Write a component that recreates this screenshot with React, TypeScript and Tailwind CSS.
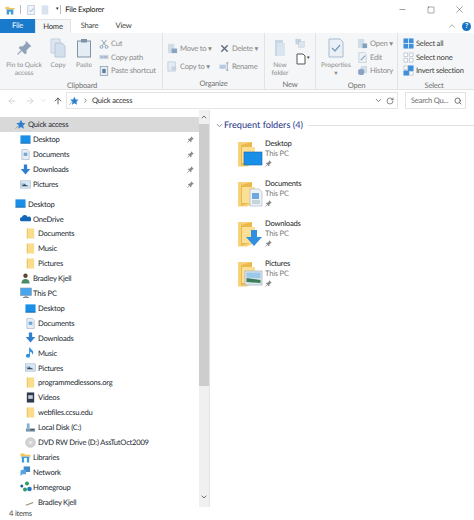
import { ReactNode } from "react";
import { ArrowLeft, ArrowRight, ArrowUp, ChevronDown, ChevronRight, ChevronUp, Minus, RotateCw, Search, Square, X } from "lucide-react";

function Sv({ s = 11, vb = "0 0 12 12", children, className = "" }: { s?: number; vb?: string; children: ReactNode; className?: string }) {
  return (
    <svg width={s} height={s} viewBox={vb} className={"shrink-0 " + className}>
      {children}
    </svg>
  );
}

const Star = ({ s = 11 }: { s?: number }) => (
  <Sv s={s}>
    <path d="M6.5 0.8l1.5 3.4 3.5.4-2.6 2.3.8 3.6-3.2-1.9-3 1.9.7-3.6L1.3 4.6l3.6-.4z" fill="#2f7fd0" />
    <path d="M0.5 10.5L4 7" stroke="#8aa" strokeWidth="1" />
  </Sv>
);
const Pin = ({ s = 7, c = "#8a8a8a" }: { s?: number; c?: string }) => (
  <Sv s={s} vb="0 0 10 10">
    <path d="M6 0.5l3.5 3.5-1.2.6-2 2 .1 1.7-1 .6-4-4 .7-1 1.6.1 2-2z" fill={c} />
    <path d="M3 7L.5 9.5" stroke={c} strokeWidth="1" />
  </Sv>
);
const FolderSmall = () => (
  <Sv s={11}>
    <path d="M2 0.5h8v11H2z" fill="#fbdc8b" />
    <path d="M2 0.5h1v11H2z" fill="#e8c25f" />
  </Sv>
);
const DesktopIcon = () => (
  <Sv s={11}>
    <rect x="0.5" y="1.5" width="11" height="8.5" fill="#1a8fe8" />
    <rect x="0.5" y="9.5" width="11" height="1" fill="#1467a8" />
  </Sv>
);
const DocIcon = () => (
  <Sv s={11}>
    <path d="M2 0.5h6l2 2v9H2z" fill="#e9eef4" stroke="#9fb3c8" strokeWidth="0.7" />
    <rect x="4" y="4" width="4" height="3.5" fill="#6fa8dc" />
  </Sv>
);
const DownIcon = () => (
  <Sv s={11}>
    <path d="M4.2 0.5h3.6v5h3.4L6 11.5.8 5.5h3.4z" fill="#2f7fd0" />
  </Sv>
);
const PicIcon = () => (
  <Sv s={11}>
    <rect x="0.5" y="2" width="11" height="8" fill="#d9e6f2" stroke="#9fb3c8" strokeWidth="0.6" />
    <path d="M1.5 8l3-2.5 5 2.5z" fill="#33485e" />
    <path d="M1.5 5h5l-5 1.5z" fill="#6fa8dc" />
  </Sv>
);
const CloudIcon = () => (
  <Sv s={11}>
    <path d="M1 9a2.3 2.3 0 0 1 1-4.3 3.4 3.4 0 0 1 6.4-.3A2.6 2.6 0 0 1 11 9z" fill="#1565b8" />
  </Sv>
);
const UserIcon = () => (
  <Sv s={11}>
    <circle cx="6" cy="3" r="2.4" fill="#5a4632" />
    <path d="M1.5 11.5c0-3.5 2-5 4.5-5s4.5 1.5 4.5 5z" fill="#4c8a68" />
  </Sv>
);
const PcIcon = () => (
  <Sv s={12}>
    <rect x="0.5" y="1" width="11" height="7.5" fill="#49a6ee" stroke="#8097ad" strokeWidth="0.6" />
    <rect x="4.5" y="8.5" width="3" height="1.5" fill="#9aa9b8" />
    <rect x="3" y="10" width="6" height="1" fill="#7d8b99" />
  </Sv>
);
const MusicIcon = () => (
  <Sv s={11}>
    <path d="M4.5 0.5h1c.3 2 3.5 2.5 3.5 5.5 0 1-.4 2-1 2.5.2-2-1-3-2.500-3.300V9.500a2.200 2 0 1 1-1-1.600z" fill="#2f8fe0" />
  </Sv>
);
const VideoIcon = () => (
  <Sv s={11}>
    <rect x="2" y="0.500" width="8" height="11" fill="#2f3a4f" />
    <rect x="3.500" y="3.500" width="5" height="4" fill="#c4cbd6" />
  </Sv>
);
const DiskIcon = () => (
  <Sv s={11}>
    <rect x="1" y="7" width="10" height="3.500" fill="#8097a8" />
    <rect x="2" y="1.500" width="3" height="5.500" fill="#7fb0d8" />
    <rect x="6" y="8" width="4" height="1" fill="#2d3b45" />
  </Sv>
);
const DvdIcon = () => (
  <Sv s={11}>
    <circle cx="6" cy="6" r="5.300" fill="#d2d4d6" stroke="#a9abad" strokeWidth="0.500" />
    <circle cx="6" cy="6" r="1.300" fill="#f5f5f5" />
  </Sv>
);
const LibIcon = () => (
  <Sv s={11}>
    <path d="M0.500 1.500h4l1 1.500h6v2h-11z" fill="#f4c552" />
    <path d="M1.500 5h9v1.500h-9z" fill="#3f9ad6" />
    <path d="M2 6.500h2.500v5H2zM7.500 6.500H10v5H7.500z" fill="#3f9ad6" />
  </Sv>
);
const NetIcon = () => (
  <Sv s={11}>
    <rect x="4" y="0.500" width="7" height="6" fill="#3f88c9" />
    <path d="M0.500 6a2 2 0 0 1 2-2h4v5h-4l-2 2z" fill="#5aa3de" />
  </Sv>
);
const HomeIcon = () => (
  <Sv s={12}>
    <circle cx="1.800" cy="5" r="1.500" fill="#1f5f9e" />
    <circle cx="7" cy="2.500" r="2" fill="#2a9d5c" />
    <circle cx="9.500" cy="8" r="2.300" fill="#1f76c4" />
    <circle cx="5" cy="8.500" r="2" fill="#2a9d5c" />
  </Sv>
);
const UserFlat = () => (
  <Sv s={11}>
    <path d="M1 10l8-3" stroke="#9a8a70" strokeWidth="1.200" />
  </Sv>
);

const nav: { icon: ReactNode; label: string; lvl: 1 | 2 | 3; pin?: boolean; sel?: boolean; gap?: boolean }[] = [
  { icon: <Star />, label: "Quick access", lvl: 3, sel: true },
  { icon: <DesktopIcon />, label: "Desktop", lvl: 1, pin: true },
  { icon: <DocIcon />, label: "Documents", lvl: 1, pin: true },
  { icon: <DownIcon />, label: "Downloads", lvl: 1, pin: true },
  { icon: <PicIcon />, label: "Pictures", lvl: 1, pin: true },
  { icon: <DesktopIcon />, label: "Desktop", lvl: 3, gap: true },
  { icon: <CloudIcon />, label: "OneDrive", lvl: 1 },
  { icon: <FolderSmall />, label: "Documents", lvl: 2 },
  { icon: <FolderSmall />, label: "Music", lvl: 2 },
  { icon: <FolderSmall />, label: "Pictures", lvl: 2 },
  { icon: <UserIcon />, label: "Bradley Kjell", lvl: 1 },
  { icon: <PcIcon />, label: "This PC", lvl: 1 },
  { icon: <DesktopIcon />, label: "Desktop", lvl: 2 },
  { icon: <DocIcon />, label: "Documents", lvl: 2 },
  { icon: <DownIcon />, label: "Downloads", lvl: 2 },
  { icon: <MusicIcon />, label: "Music", lvl: 2 },
  { icon: <PicIcon />, label: "Pictures", lvl: 2 },
  { icon: <FolderSmall />, label: "programmedlessons.org", lvl: 2 },
  { icon: <VideoIcon />, label: "Videos", lvl: 2 },
  { icon: <FolderSmall />, label: "webfiles.ccsu.edu", lvl: 2 },
  { icon: <DiskIcon />, label: "Local Disk (C:)", lvl: 2 },
  { icon: <DvdIcon />, label: "DVD RW Drive (D:) AssTutOct2009", lvl: 2 },
  { icon: <LibIcon />, label: "Libraries", lvl: 1 },
  { icon: <NetIcon />, label: "Network", lvl: 1 },
  { icon: <HomeIcon />, label: "Homegroup", lvl: 1 },
  { icon: <UserFlat />, label: "Bradley Kjell", lvl: 2 },
];

const indent = { 1: "pl-[20px]", 2: "pl-[25px]", 3: "pl-[15px]" };

function NavPane() {
  return (
    <div className="w-[199px] pt-[7px] overflow-hidden">
      {nav.map((n, i) => (
        <div
          key={i}
          className={
            "h-[14.9px] flex items-center gap-[2px] pr-[5px] " +
            indent[n.lvl] +
            (n.sel ? " bg-[#d9d9d9]" : "") +
            (n.gap ? " mt-[5px]" : "")
          }
        >
          <span className="w-[11px] flex justify-center shrink-0">{n.icon}</span>
          <span className="flex-1 pt-[1px] whitespace-nowrap text-[#222831]">{n.label}</span>
          {n.pin && <Pin />}
        </div>
      ))}
    </div>
  );
}

function ScrollBar() {
  return (
    <div className="w-[10px] flex flex-col items-stretch bg-[#f0f0f0] text-[#555]">
      <div className="h-[14px] pt-[3px] flex justify-center"><ChevronUp size={8} strokeWidth={2.5} /></div>
      <div className="h-[262px] bg-[#cdcdcd]" />
      <div className="flex-1" />
      <div className="h-[14px] flex justify-center"><ChevronDown size={8} strokeWidth={2.5} /></div>
    </div>
  );
}

function BigFolder({ children }: { children?: ReactNode }) {
  return (
    <Sv s={26} vb="0 0 26 26">
      <path d="M1 1h14v22l-5 2.500H1z" fill="#f6d27a" />
      <path d="M4 4l11-3v20L4 25z" fill="#e9b94e" />
      <path d="M5 6h13v16H5z" fill="#fbdf95" />
      {children}
    </Sv>
  );
}

const frequent = [
  { label: "Desktop", over: <><rect x="7" y="11" width="18" height="13" fill="#1a8fe8" stroke="#1467a8" strokeWidth="0.600" /></> },
  { label: "Documents", over: <><path d="M13 8h9l3 3v14H13z" fill="#eef2f6" stroke="#9fb3c8" strokeWidth="0.600" /><rect x="15" y="12" width="7" height="6" fill="#6fa8dc" /><path d="M15 20h8M15 22h8" stroke="#8aa" strokeWidth="0.800" /></> },
  { label: "Downloads", over: <path d="M14 9h6v7h5l-8 9-8-9h5z" fill="#2f8fe0" /> },
  { label: "Pictures", over: <><rect x="8" y="10" width="17" height="14" fill="#dde7f0" stroke="#aab6c2" strokeWidth="0.800" /><path d="M9.500 11.500h14v6l-14-1z" fill="#9cc8ea" /><path d="M9.500 21v-4l7 1 7 1v3z" fill="#3d7d5a" /></> },
];

function Content() {
  return (
    <div className="flex-1 pt-[7px] border-l border-[#e4e4e4] overflow-hidden">
      <div className="h-[14px] flex items-center pl-[5px] mt-[1px]">
        <ChevronDown size={9} className="text-[#5a6a88]" />
        <span className="text-[9.200px] tracking-normal text-[#1e3287] whitespace-nowrap">Frequent folders (4)</span>
        <div className="flex-1 h-px bg-[#e2e2e2] ml-[5px]" />
      </div>
      <div className="flex flex-col gap-[10px] pl-[27px] pt-[7px]">
        {frequent.map((f) => (
          <div key={f.label} className="h-[30px] flex items-center gap-[2px]">
            <BigFolder>{f.over}</BigFolder>
            <div className="flex flex-col pb-[1px] leading-[9.500px]">
              <span className="text-[#1c1c1c]">{f.label}</span>
              <span className="text-[#7b7b7b]">This PC</span>
              <span className="h-[9.500px] flex items-center"><Pin /></span>
            </div>
          </div>
        ))}
      </div>
    </div>
  );
}

function Group({ label, className, children }: { label: string; className: string; children: ReactNode }) {
  return (
    <div className={"flex flex-col border-r border-[#e2e3e4] " + className}>
      <div className="flex-1 flex">{children}</div>
      <div className="h-[13px] text-center leading-[15px] text-[#6f6f6f]">{label}</div>
    </div>
  );
}

function BigBtn({ icon, lines, className = "" }: { icon: ReactNode; lines: string[]; className?: string }) {
  return (
    <div className={"flex flex-col items-center text-center pt-[4px] " + className}>
      <div className="h-[21px] flex items-center justify-center">{icon}</div>
      <div className="flex flex-col mt-[3px] text-[6.600px] tracking-normal leading-[8px] text-[#8b8b8b] whitespace-nowrap">
        {lines.map((l) => <span key={l} className="h-[8px]">{l}</span>)}
      </div>
    </div>
  );
}

function Small({ icon, children, dark }: { icon: ReactNode; children: ReactNode; dark?: boolean }) {
  return (
    <div className={"h-[13.500px] flex items-center gap-[2px] whitespace-nowrap " + (dark ? "text-[#3c3c3c]" : "text-[#8b8b8b]")}>
      <span className="w-[11px] flex justify-center">{icon}</span>
      {children}
    </div>
  );
}

const tiny = {
  cut: <Sv s={10}><path d="M3 1l5 7M9 1L4 8" stroke="#7f93a8" strokeWidth="1" fill="none" /><circle cx="3" cy="9.500" r="1.700" fill="none" stroke="#7f93a8" /><circle cx="9" cy="9.500" r="1.700" fill="none" stroke="#7f93a8" /></Sv>,
  path: <Sv s={10}><rect x="0.500" y="3.500" width="11" height="5" fill="#c8d6e4" /><path d="M2 6h3M6 6h4" stroke="#7f93a8" /></Sv>,
  shortcut: <Sv s={10}><rect x="1.500" y="0.500" width="9" height="11" fill="#e8eef5" stroke="#7f93a8" strokeWidth="0.800" /><rect x="4" y="3.500" width="4" height="5" fill="#5b7ca0" /></Sv>,
  move: <Sv s={11}><rect x="1" y="1" width="7" height="10" fill="#d3dde8" /><rect x="5" y="6" width="6" height="5" fill="#8aa5c2" /></Sv>,
  copyTo: <Sv s={11}><rect x="1" y="1" width="8" height="10" fill="#e4ebf2" stroke="#b5c3d1" strokeWidth="0.700" /><rect x="5" y="6" width="5" height="4" fill="#c3d2e0" /></Sv>,
  del: <X size={11} strokeWidth={3} className="text-[#5b6b7b]" />,
  ren: <Sv s={11}><rect x="0.500" y="4" width="7" height="4.500" fill="#b7cbe0" /><path d="M9 2v8M7.500 2h3M7.500 10h3" stroke="#7f93a8" strokeWidth="0.800" /></Sv>,
  open: <Sv s={11}><rect x="1" y="1" width="7" height="10" fill="#d3dde8" /><rect x="6" y="6" width="5" height="5" fill="#7f9fbf" /></Sv>,
  edit: <Sv s={11}><path d="M2 0.500h6l2 2v9H2z" fill="#eef2f6" stroke="#b5c3d1" strokeWidth="0.700" /><path d="M4 9l5-5" stroke="#8aa5c2" strokeWidth="1.200" /></Sv>,
  hist: <Sv s={11}><rect x="4" y="1" width="7" height="8" fill="#d3dde8" /><circle cx="4.500" cy="7.500" r="3.500" fill="#8aa5c2" /></Sv>,
  all: <Sv s={11}><rect x="0.500" y="0.500" width="11" height="11" fill="#3d8fdc" /><path d="M6 .5v11M.5 6h11" stroke="#fff" strokeWidth="0.800" /></Sv>,
  none: <Sv s={11}><path d="M1 1h4v4H1zM7 1h4v4H7zM1 7h4v4H1zM7 7h4v4H7z" fill="#fff" stroke="#a8b4c0" strokeWidth="0.700" /></Sv>,
  inv: <Sv s={11}><rect x="5.500" y="0.500" width="6" height="6" fill="#3d8fdc" /><rect x="0.500" y="6" width="6" height="5.500" fill="#3d8fdc" /><path d="M1 1h4v4H1zM7 7h4v4H7z" fill="#fff" stroke="#a8b4c0" strokeWidth="0.700" /></Sv>,
};

function Ribbon() {
  return (
    <div className="h-[57px] flex bg-[#f5f6f7] border-b border-[#e2e3e4] pl-[2px]">
      <Group label="Clipboard" className="w-[161px]">
        <BigBtn
          className="w-[44px]"
          icon={<Sv s={15} vb="0 0 12 12"><path d="M7 0.500l4.500 4.500-1.500.8-2.500 2.500.2 2.200-1.300.8-5-5 .9-1.300 2.100.2 2.500-2.500z" fill="#8fa2b8" /><path d="M3.500 8.500L.5 11.500" stroke="#8fa2b8" /></Sv>}
          lines={["Pin to Quick", "access"]}
        />
        <BigBtn
          className="w-[24px]"
          icon={<Sv s={20} vb="0 0 20 20"><path d="M3 1h9v14H3z" fill="#dfe8f2" stroke="#c4d1de" /><path d="M7 5h7l3 3v11H7z" fill="#d3e0ec" stroke="#b6c7d8" /></Sv>}
          lines={["Copy"]}
        />
        <BigBtn
          className="w-[28px]"
          icon={<Sv s={20} vb="0 0 20 20"><rect x="3.500" y="3" width="13" height="16" fill="#e4ecf4" stroke="#7f93a8" /><rect x="7" y="1" width="6" height="3.500" fill="#7f93a8" /></Sv>}
          lines={["Paste"]}
        />
        <div className="pt-[4px]">
          <Small icon={tiny.cut}>Cut</Small>
          <Small icon={tiny.path}>Copy path</Small>
          <Small icon={tiny.shortcut}>Paste shortcut</Small>
        </div>
      </Group>
      <Group label="Organize" className="w-[102px]">
        <div className="w-[56px] pt-[9px] pl-[4px] flex flex-col gap-[4.500px]">
          <Small icon={tiny.move}>Move to ▾</Small>
          <Small icon={tiny.copyTo}>Copy to ▾</Small>
        </div>
        <div className="pt-[9px] flex flex-col gap-[4.500px]">
          <Small icon={tiny.del}>Delete ▾</Small>
          <Small icon={tiny.ren}>Rename</Small>
        </div>
      </Group>
      <Group label="New" className="w-[51px]">
        <BigBtn
          className="w-[30px]"
          icon={<Sv s={20} vb="0 0 20 20"><path d="M5 2h8v16H5z" fill="#c8d7e6" /><path d="M7 5h8v13H7z" fill="#d9e4ef" /></Sv>}
          lines={["New", "folder"]}
        />
        <div className="pt-[3px]">
          <div className="h-[15px] flex items-center"><Sv s={11}><rect x="0.500" y="1" width="6" height="6" fill="#c5d3e0" /><rect x="4" y="4" width="6" height="6" fill="#dde6ee" stroke="#b5c3d1" strokeWidth="0.500" /></Sv></div>
          <div className="h-[15px] flex items-center text-[#333]"><Sv s={12}><path d="M2 1h6l2 2v8H2z" fill="#fff" stroke="#555" /></Sv><span className="text-[5px]">▾</span></div>
        </div>
      </Group>
      <Group label="Open" className="w-[82px]">
        <BigBtn
          className="w-[40px]"
          icon={<Sv s={20} vb="0 0 20 20"><path d="M3 1h11l3 3v15H3z" fill="#eaf0f6" stroke="#a9bccf" /><path d="M6 10l3 3 5-6" stroke="#7f9fbf" strokeWidth="1.500" fill="none" /></Sv>}
          lines={["Properties", "▾"]}
        />
        <div className="pt-[4px] pl-[1px]">
          <Small icon={tiny.open}>Open ▾</Small>
          <Small icon={tiny.edit}>Edit</Small>
          <Small icon={tiny.hist}>History</Small>
        </div>
      </Group>
      <Group label="Select" className="w-[72px] border-r-0">
        <div className="pt-[4px] pl-[5px]">
          <Small dark icon={tiny.all}>Select all</Small>
          <Small dark icon={tiny.none}>Select none</Small>
          <Small dark icon={tiny.inv}>Invert selection</Small>
        </div>
      </Group>
    </div>
  );
}

export default function App() {
  return (
    <div className="w-[474px] h-[520px] flex flex-col bg-white overflow-hidden text-[7.600px] tracking-[-0.03em] text-[#222] font-['Lato',sans-serif] [text-rendering:geometricPrecision]">
      {/* title bar */}
      <div className="h-[19px] flex items-center pl-[5px]">
        <Sv s={10}><path d="M0.500 2h4l1 1.500h6v2h-11z" fill="#f4c552" /><path d="M2 5.500h8v6H7V8H5v3.500H2z" fill="#3f9ad6" /></Sv>
        <div className="w-px h-[9px] bg-[#bbb] ml-[5px]" />
        <div className="ml-[5px]"><Sv s={10}><path d="M2 0.500h8v11H2z" fill="#f1f5f9" stroke="#b9c8d7" /><path d="M4 6l2 2 3-4" stroke="#8fb0cf" fill="none" /></Sv></div>
        <div className="ml-[4px]"><Sv s={10}><path d="M2 0.500h8v11H2z" fill="#d7e3ef" /></Sv></div>
        <span className="ml-[6px] text-[5px] text-[#222]">▾</span>
        <div className="w-px h-[9px] bg-[#bbb] ml-[2px]" />
        <span className="ml-[4px] text-[#111]">File Explorer</span>
        <div className="flex-1" />
        <Minus size={9} strokeWidth={1.200} className="text-[#333] mr-[20px]" />
        <Square size={8} strokeWidth={1.300} className="text-[#333] mr-[19px]" />
        <X size={11} strokeWidth={1} className="text-[#333] mr-[9px]" />
      </div>
      {/* tabs */}
      <div className="h-[14px] flex items-stretch text-[#444]">
        <div className="w-[35px] bg-[#1979ca] text-white flex items-center justify-center">File</div>
        <div className="w-[36px] bg-[#f5f6f7] border-x border-t border-[#e2e3e4] flex items-center justify-center text-[#333]">Home</div>
        <div className="w-[37px] flex items-center justify-center">Share</div>
        <div className="w-[31px] flex items-center justify-center">View</div>
        <div className="flex-1" />
        <ChevronUp size={10} className="self-center text-[#999] mr-[5px]" />
        <div className="self-center w-[9px] h-[9px] mr-[3px] rounded-full bg-[#1572c4] text-white text-[7px] leading-[9px] text-center font-bold">?</div>
      </div>
      <Ribbon />
      {/* address bar */}
      <div className="h-[20px] flex items-center pl-[7px] pr-[8px] pt-[1px] text-[#ccc]">
        <ArrowLeft size={10} />
        <ArrowRight size={10} className="ml-[8px]" />
        <ChevronDown size={7} className="ml-[5px]" />
        <ArrowUp size={10} className="ml-[6px] text-[#444]" />
        <div className="ml-[3px] w-[332px] h-[17px] border border-[#e4e4e4] flex items-center pl-[2px] pr-[3px] text-[#333]">
          <Star s={10} />
          <ChevronRight size={7} className="ml-[3px]" />
          <span className="ml-[3px] flex-1">Quick access</span>
          <ChevronDown size={9} className="text-[#555] mr-[3px]" />
          <RotateCw size={8} className="text-[#555]" />
        </div>
        <div className="ml-[7px] flex-1 h-[17px] border border-[#e4e4e4] flex items-center pl-[5px] pr-[3px] text-[#6d6d6d]">
          <span className="flex-1 whitespace-nowrap">Search Qu...</span>
          <Search size={8} className="text-[#333]" />
        </div>
      </div>
      {/* main */}
      <div className="flex-1 min-h-0 flex">
        <NavPane />
        <ScrollBar />
        <Content />
      </div>
      {/* status */}
      <div className="h-[13px] flex items-center pl-[9px] text-[#444]">4 items</div>
    </div>
  );
}
